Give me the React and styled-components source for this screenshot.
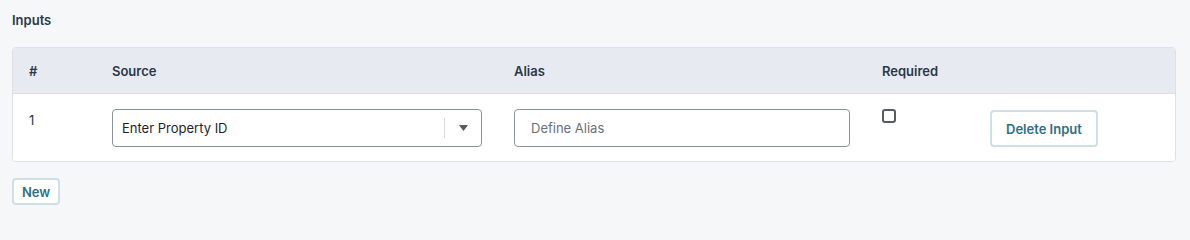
import React from 'react';
import styled, { createGlobalStyle } from 'styled-components';

const GlobalStyle = createGlobalStyle`
  body {
    margin: 0;
    background: #f6f7f9;
    font-family: Inter, "Noto Sans", sans-serif;
    color: #2d3748;
  }
`;

const Page = styled.div`
  padding: 12px 14px 16px 12px;
`;

const Title = styled.h3`
  margin: 0 0 18px;
  font-size: 13px;
  font-weight: 600;
  line-height: 17px;
  color: #2d3748;
`;

const Card = styled.div`
  border: 1px solid #dde1e7;
  border-radius: 4px;
  background: #fff;
  overflow: hidden;
`;

const Row = styled.div`
  display: grid;
  grid-template-columns: 83px 402px 368px 108px 1fr;
  align-items: ${(p) => (p.head ? 'center' : 'start')};
  height: ${(p) => (p.head ? '46px' : '67px')};
  padding-top: ${(p) => (p.head ? '0' : '15px')};
  box-sizing: border-box;
  background: ${(p) => (p.head ? '#e7ebf1' : '#fff')};
  border-bottom: ${(p) => (p.head ? '1px solid #dde1e7' : 'none')};
`;

const Cell = styled.div`
  padding: 0 16px;
  font-size: 13px;
  font-weight: ${(p) => (p.head ? 600 : 400)};
  line-height: 18px;
  color: #2d3748;
  padding-top: ${(p) => (p.top ? `${p.top}px` : '0')};
`;

const Select = styled.div`
  display: flex;
  align-items: center;
  height: 38px;
  box-sizing: border-box;
  border: 1px solid #8e939b;
  border-radius: 4px;
  background: #fff;
`;

const SelectValue = styled.span`
  flex: 1;
  padding-left: 9px;
  font-size: 13px;
  color: #1f2329;
`;

const Separator = styled.span`
  width: 1px;
  height: 20px;
  background: #d6d9de;
`;

const Arrow = styled.span`
  width: 36px;
  display: flex;
  justify-content: center;
  svg {
    display: block;
  }
`;

const TextInput = styled.input`
  width: 100%;
  height: 38px;
  box-sizing: border-box;
  border: 1px solid #8e939b;
  border-radius: 4px;
  padding: 0 16px;
  font-family: inherit;
  font-size: 13px;
  outline: none;
  &::placeholder {
    color: #6b7078;
  }
`;

const Checkbox = styled.span`
  display: block;
  width: 14px;
  height: 14px;
  box-sizing: border-box;
  border: 2px solid #575c64;
  border-radius: 3px;
`;

const Button = styled.button`
  font-family: inherit;
  font-weight: 600;
  font-size: 13px;
  color: #2f6f83;
  background: #fff;
  border: 2px solid #cfdfe6;
  border-radius: 4px;
  height: ${(p) => (p.small ? '27px' : '37px')};
  padding: ${(p) => (p.small ? '0 8px' : '0 14px')};
  cursor: pointer;
`;

const Footer = styled.div`
  margin-top: 16px;
`;

const App = () => {
  return (
    <Page>
      <GlobalStyle />
      <Title>Inputs</Title>
      <Card>
        <Row head>
          <Cell head>#</Cell>
          <Cell head>Source</Cell>
          <Cell head>Alias</Cell>
          <Cell head>Required</Cell>
          <Cell head />
        </Row>
        <Row>
          <Cell top={2}>1</Cell>
          <Cell>
            <Select>
              <SelectValue>Enter Property ID</SelectValue>
              <Separator />
              <Arrow>
                <svg width="9" height="6" viewBox="0 0 9 6">
                  <path d="M0 0 L9 0 L4.5 6 Z" fill="#555a61" />
                </svg>
              </Arrow>
            </Select>
          </Cell>
          <Cell>
            <TextInput placeholder="Define Alias" />
          </Cell>
          <Cell>
            <Checkbox />
          </Cell>
          <Cell top={1}>
            <Button>Delete Input</Button>
          </Cell>
        </Row>
      </Card>
      <Footer>
        <Button small>New</Button>
      </Footer>
    </Page>
  );
};

export default App;
